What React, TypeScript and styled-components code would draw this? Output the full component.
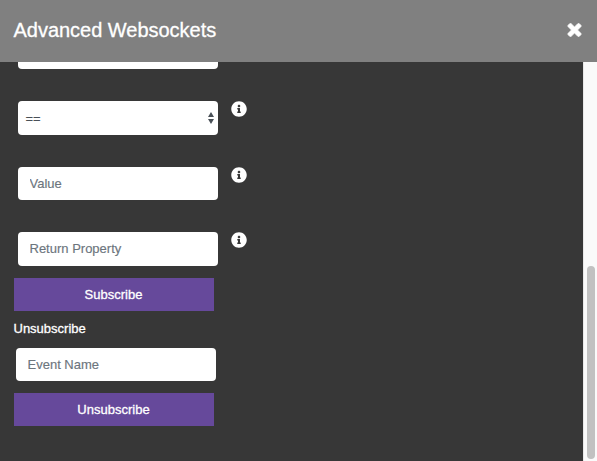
import React from "react";
import styled, { createGlobalStyle } from "styled-components";
import { FaInfoCircle } from "react-icons/fa";

const GlobalStyle = createGlobalStyle`
  *, *::before, *::after { box-sizing: border-box; }
  body { margin: 0; overflow: hidden; background: #373737; font-family: "Liberation Sans", Arial, sans-serif; }
`;

const Dialog = styled.div`
  display: flex;
  flex-direction: column;
  width: 100vw;
  height: 100vh;
`;

const Header = styled.header`
  display: flex;
  align-items: center;
  justify-content: space-between;
  flex: 0 0 62px;
  padding: 0 15px 2px 13.5px;
  background: #808080;
  color: #fff;
`;

const Title = styled.h1`
  margin: 0;
  font-size: 20px;
  font-weight: 400;
  line-height: 24px;
  letter-spacing: -0.02px;
  -webkit-text-stroke: 0.3px #fff;
`;

const CloseButton = styled.button`
  display: flex;
  padding: 0;
  border: 0;
  background: none;
  color: #fff;
  svg { width: 15px; height: 14px; }
`;

const Body = styled.div`
  display: flex;
  flex: 1;
  min-height: 0;
`;

const Content = styled.main`
  flex: 1;
  padding-left: 14px;
  overflow: hidden;
  background: #373737;
`;

const FieldRow = styled.div<{ $gap: number }>`
  display: flex;
  align-items: flex-start;
  gap: 13px;
  margin: 0 0 ${(p) => p.$gap}px 4px;
`;

const ClippedField = styled.div`
  width: 200px;
  height: 7px;
  border-radius: 0 0 4px 4px;
  background: #fff;
`;

const Input = styled.input<{ $height: number }>`
  display: block;
  width: 200px;
  height: ${(p) => p.$height}px;
  padding: 0 12px ${(p) => p.$height - 33}px 11.5px;
  border: 0;
  border-radius: 4px;
  background: #fff;
  color: #495057;
  font: 13px "Liberation Sans", Arial, sans-serif;
  &::placeholder { color: #6c757d; opacity: 1; -webkit-text-stroke: 0.15px #6c757d; }
`;

const SelectBox = styled.div`
  display: flex;
  align-items: center;
  justify-content: space-between;
  width: 200px;
  height: 34px;
  padding: 0 4px 0 7.5px;
  border-radius: 4px;
  background: #fff;
  color: #495057;
  font-size: 13px;
  -webkit-text-stroke: 0.15px #495057;
`;

const InfoIcon = styled(FaInfoCircle)`
  width: 16px;
  height: 16px;
  color: #fff;
`;

const EventField = styled.div`
  margin: 0 0 12px 2px;
`;

const ActionButton = styled.button`
  display: block;
  width: 200px;
  height: 33px;
  padding: 0 1px 0 0;
  border: 0;
  background: #66499b;
  color: #fff;
  font: 13px "Liberation Sans", Arial, sans-serif;
  -webkit-text-stroke: 0.3px #fff;
`;

const SectionLabel = styled.div`
  height: 37px;
  margin-left: -0.5px;
  padding-top: 9px;
  color: #fff;
  font-size: 13px;
  line-height: 18px;
  -webkit-text-stroke: 0.3px #fff;
`;

const ScrollTrack = styled.div`
  display: flex;
  align-items: flex-end;
  width: 14px;
  padding: 0 2px 2px 3px;
  border-left: 1px solid #e8e8e8;
  background: #fafafa;
`;

const ScrollThumb = styled.div`
  width: 8px;
  height: 193px;
  border-radius: 4px;
  background: #c1c1c1;
`;

const CloseIcon = () => (
  <svg viewBox="80 336 1248 1248" fill="currentColor" stroke="currentColor" strokeWidth="60">
    <path d="M1298 1322q0 40-28 68l-136 136q-28 28-68 28t-68-28l-294-294-294 294q-28 28-68 28t-68-28l-136-136q-28-28-28-68t28-68l294-294-294-294q-28-28-28-68t28-68l136-136q28-28 68-28t68 28l294 294 294-294q28-28 68-28t68 28l136 136q28 28 28 68t-28 68l-294 294 294 294q28 28 28 68z" />
  </svg>
);

export default function App() {
  return (
    <Dialog>
      <GlobalStyle />
      <Header>
        <Title>Advanced Websockets</Title>
        <CloseButton aria-label="Close"><CloseIcon /></CloseButton>
      </Header>
      <Body>
        <Content>
          <FieldRow $gap={32}><ClippedField /></FieldRow>
          <FieldRow $gap={32}>
            <SelectBox>
              <span>==</span>
              <svg width="6" height="12" viewBox="0 0 6 12" fill="#495057">
                <path d="M3 0 6 5H0zM3 12 0 7h6z" />
              </svg>
            </SelectBox>
            <InfoIcon />
          </FieldRow>
          <FieldRow $gap={32}><Input $height={33} placeholder="Value" /><InfoIcon /></FieldRow>
          <FieldRow $gap={12}><Input $height={34} placeholder="Return Property" /><InfoIcon /></FieldRow>
          <ActionButton>Subscribe</ActionButton>
          <SectionLabel>Unsubscribe</SectionLabel>
          <EventField><Input $height={33} placeholder="Event Name" /></EventField>
          <ActionButton>Unsubscribe</ActionButton>
        </Content>
        <ScrollTrack><ScrollThumb /></ScrollTrack>
      </Body>
    </Dialog>
  );
}
